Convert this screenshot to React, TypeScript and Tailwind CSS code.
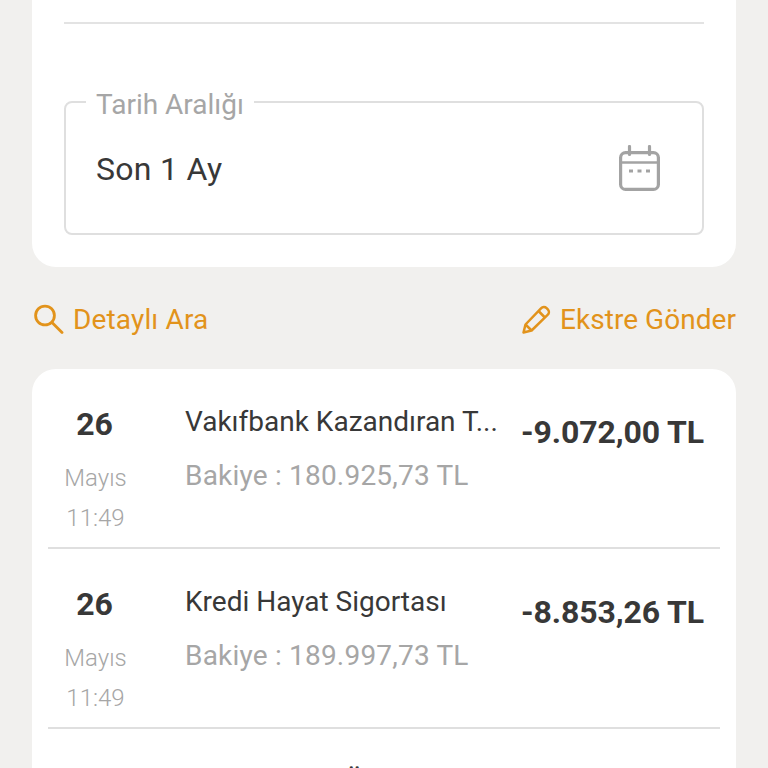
const rows = [
  { title: 'Vakıfbank Kazandıran T...', balance: 'Bakiye : 180.925,73 TL', amount: '-9.072,00 TL' },
  { title: 'Kredi Hayat Sigortası', balance: 'Bakiye : 189.997,73 TL', amount: '-8.853,26 TL' },
];

const CalendarIcon = () => (
  <svg width="41" height="46" viewBox="0 0 41 46" fill="none" stroke="#a3a3a3" strokeWidth="3.2">
    <path d="M10.5 1.5v8M30.5 1.5v8" strokeLinecap="round" />
    <rect x="1.6" y="7.6" width="37.8" height="36.8" rx="5" />
    <path d="M1.6 17.5h37.8" strokeWidth="2.6" />
    <path d="M10 26h4M18.5 26h4M27 26h4" strokeWidth="3" />
  </svg>
);

const SearchIcon = () => (
  <svg width="30" height="30" viewBox="0 0 30 30" fill="none" stroke="#e2931b" strokeWidth="2.8" strokeLinecap="round">
    <circle cx="11" cy="11.5" r="9.4" />
    <path d="M18 18.5l10 10" />
  </svg>
);

const PencilIcon = () => (
  <svg width="29" height="29" viewBox="0 0 29 29" fill="none" stroke="#e2931b" strokeWidth="2.5" strokeLinejoin="round">
    <path d="M1.5 27.5l2-8L19 3.3c1.6-1.7 4-1.7 5.6-.2l1.2 1.2c1.5 1.6 1.5 4-.2 5.6L9.6 25.5z" />
    <path d="M16.5 6l6.4 6.5M3.5 19.5l6.1 6" />
  </svg>
);

export default function App() {
  return (
    <div className="h-[768px] w-[768px] overflow-hidden bg-[#f1f0ee] px-8 font-['Roboto',sans-serif]">
      <div className="rounded-b-[24px] bg-white px-8 pb-8 pt-[22px]">
        <div className="h-[2px] bg-[#e3e3e3]" />
        <div className="relative mt-[77px] flex h-[134px] items-center justify-between rounded-lg border-2 border-[#dfdfdf] pl-[30px] pr-[42px]">
          <span className="absolute -top-[11px] left-[20px] h-[26px] bg-white px-[10px] text-[28px] leading-[26px] text-[#a6a6a6]">
            Tarih Aralığı
          </span>
          <span className="translate-y-[1px] text-[32px] tracking-[0.3px] text-[#383838]">Son 1 Ay</span>
          <CalendarIcon />
        </div>
      </div>

      <div className="mt-[34px] flex h-[36px] items-center justify-between text-[28px] text-[#e2931b]">
        <div className="flex items-center gap-[9px] pl-[2px]">
          <SearchIcon />
          <span className="translate-y-[1px] tracking-[0.15px]">Detaylı Ara</span>
        </div>
        <div className="flex items-center gap-[9px]">
          <PencilIcon />
          <span className="translate-y-[1px] tracking-[0.05px]">Ekstre Gönder</span>
        </div>
      </div>

      <div className="mt-[32px] rounded-t-[24px] bg-white px-4">
        {rows.map((row) => (
          <div key={row.amount} className="flex h-[180px] border-b-2 border-[#dfdfdf] pr-4">
            <div className="flex w-[95px] flex-col items-center pt-[34px]">
              <span className="-translate-x-[1px] text-[32px] font-bold leading-[42px] text-[#383838]">26</span>
              <span className="mt-[13px] text-[24px] font-light leading-[40px] text-[#a6a6a6]">Mayıs</span>
              <span className="text-[24px] font-light leading-[40px] text-[#a6a6a6]">11:49</span>
            </div>
            <div className="ml-[42px] flex-1 pt-[35px]">
              <div className="text-[28px] leading-[36px] text-[#383838]">{row.title}</div>
              <div className="mt-[18px] text-[28px] tracking-[0.2px] leading-[36px] text-[#a6a6a6]">{row.balance}</div>
            </div>
            <div className="pt-[42px] text-[32px] font-bold leading-[42px] tracking-[-0.1px] text-[#383838]">{row.amount}</div>
          </div>
        ))}
        <div className="flex h-[60px]">
          <div className="ml-[137px] pt-[35px] text-[28px] leading-[36px] text-[#383838]">Kredi Taksiti Ödemesi</div>
        </div>
      </div>
    </div>
  );
}
